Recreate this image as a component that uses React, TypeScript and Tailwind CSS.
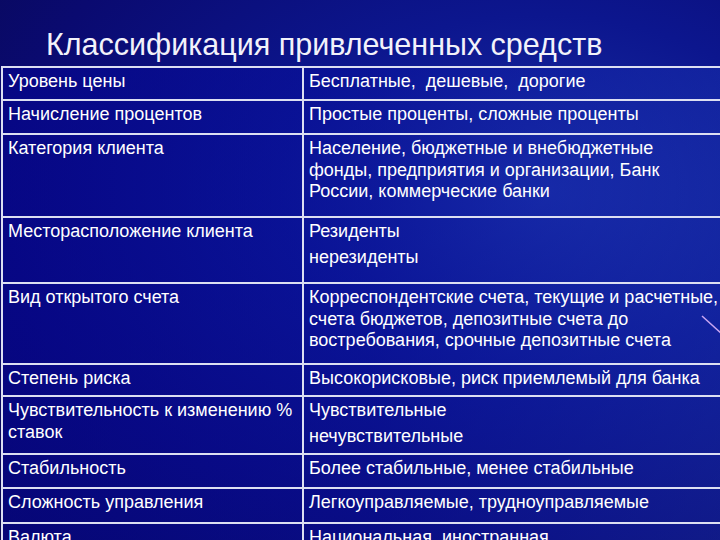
import React from "react";

type Row = { h: string; left: React.ReactNode; right: React.ReactNode };

const rows: Row[] = [
  { h: "h-[33px]", left: "Уровень цены", right: "Бесплатные,  дешевые,  дорогие" },
  { h: "h-[34px]", left: "Начисление процентов", right: "Простые проценты, сложные проценты" },
  {
    h: "h-[83px]",
    left: "Категория клиента",
    right: (
      <>
        Население, бюджетные и внебюджетные
        <br />
        фонды, предприятия и организации, Банк
        <br />
        России, коммерческие банки
      </>
    ),
  },
  {
    h: "h-[66px]",
    left: "Месторасположение клиента",
    right: (
      <>
        <div>Резиденты</div>
        <div className="mt-[4px]">нерезиденты</div>
      </>
    ),
  },
  {
    h: "h-[81px]",
    left: "Вид открытого счета",
    right: (
      <>
        Корреспондентские счета, текущие и расчетные,
        <br />
        счета бюджетов, депозитные счета до
        <br />
        востребования, срочные депозитные счета
      </>
    ),
  },
  { h: "h-[32px]", left: "Степень риска", right: "Высокорисковые, риск приемлемый для банка" },
  {
    h: "h-[58px]",
    left: (
      <>
        Чувствительность к изменению %
        <br />
        ставок
      </>
    ),
    right: (
      <>
        <div>Чувствительные</div>
        <div className="mt-[4px]">нечувствительные</div>
      </>
    ),
  },
  { h: "h-[34px]", left: "Стабильность", right: "Более стабильные, менее стабильные" },
  { h: "h-[35px]", left: "Сложность управления", right: "Легкоуправляемые, трудноуправляемые" },
  { h: "h-[40px]", left: "Валюта", right: "Национальная, иностранная" },
];

export default function App() {
  return (
    <div
      className="relative w-[720px] h-[540px] overflow-hidden bg-[radial-gradient(ellipse_at_75%_35%,#1a2ea4_0%,#0c168e_35%,#0a0a70_70%,#08084e_100%)] text-white"
      style={{ fontFamily: '"Liberation Sans", Arial, sans-serif' }}
    >
      <div className="h-[66px] pl-[46px] pt-[29px] text-[30.5px] leading-[31px] text-[#f2f2fa] whitespace-nowrap">
        Классификация привлеченных средств
      </div>
      <div className="ml-[1px] w-[740px] border-t-2 border-l-2 border-[#dcdff2] bg-[linear-gradient(90deg,rgba(4,4,150,0.55)_0%,rgba(8,16,160,0.45)_50%,rgba(30,60,190,0.35)_100%)]">
        {rows.map((r, i) => (
          <div key={i} className={`flex ${r.h} border-b-2 border-[#dcdff2]`}>
            <div className="w-[301px] shrink-0 border-r-2 border-[#dcdff2] pl-[5px] pt-[3px] text-[18px] leading-[21.5px] whitespace-nowrap">
              {r.left}
            </div>
            <div className="flex-1 pl-[5px] pt-[3px] text-[18px] leading-[21.5px] whitespace-pre">
              {r.right}
            </div>
          </div>
        ))}
      </div>
      <svg className="absolute left-[696px] top-[310px]" width="30" height="30" viewBox="0 0 30 30">
        <line x1="6" y1="6" x2="26" y2="24" stroke="#c9a6f2" strokeWidth="1.5" />
      </svg>
    </div>
  );
}
